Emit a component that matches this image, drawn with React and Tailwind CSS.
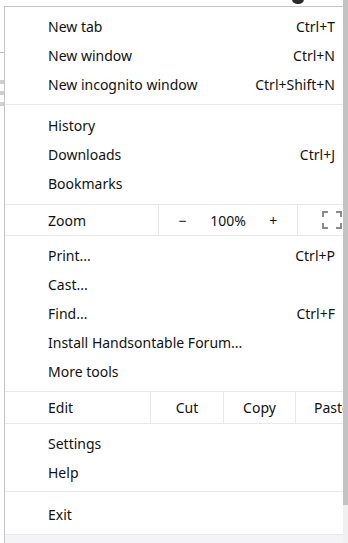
const font = { fontFamily: '"Noto Sans", "Open Sans", sans-serif' }

const Item = ({ label, shortcut }) => (
  <div className="h-[29px] flex items-center justify-between pl-[43px] pr-[8px]">
    <span>{label}</span>
    {shortcut && <span>{shortcut}</span>}
  </div>
)

const Sep = () => <div className="h-px bg-[#e8e8ea]" />

const FullscreenIcon = () => (
  <svg width="20" height="18" viewBox="0 0 20 18" fill="none" stroke="#8a8a8a" strokeWidth="2">
    <path d="M1 6V1h5M14 1h5v5M19 12v5h-5M6 17H1v-5" />
  </svg>
)

export default function App() {
  return (
    <div className="w-[348px] h-[543px] bg-white relative overflow-hidden text-[14px] text-[#111]" style={font}>
      {/* page behind the menu */}
      <div className="absolute left-[292px] -top-[6px] w-[12px] h-[10px] rounded-full bg-[#2a2a2a]" />
      <div className="absolute left-0 top-[52px] w-[4px] h-px bg-[#bdbdbd]" />
      <div className="absolute left-0 top-[80px] w-[4px] h-[4px] bg-[#cfcfcf]" />
      <div className="absolute left-0 top-[91px] w-[4px] h-[4px] bg-[#cfcfcf]" />
      <div className="absolute left-0 top-[102px] w-[4px] h-[4px] bg-[#cfcfcf]" />

      <div className="flex h-full pt-[6px]">
        <div className="w-[4px] shrink-0" />
        <div className="flex-1 min-w-0 flex flex-col border-l border-t border-[#c6c6c6] bg-white">
          <div className="pt-[5px] pb-[5px]">
            <Item label="New tab" shortcut="Ctrl+T" />
            <Item label="New window" shortcut="Ctrl+N" />
            <Item label="New incognito window" shortcut="Ctrl+Shift+N" />
          </div>
          <Sep />
          <div className="pt-[6px] pb-[6px]">
            <Item label="History" />
            <Item label="Downloads" shortcut="Ctrl+J" />
            <Item label="Bookmarks" />
          </div>
          <Sep />
          <div className="h-[30px] flex items-stretch">
            <div className="w-[153px] shrink-0 pl-[43px] flex items-center">Zoom</div>
            <div className="w-[140px] shrink-0 border-l border-r border-[#e8e8ea] flex items-center">
              <span className="w-[48px] text-center">−</span>
              <span className="w-[44px] text-center">100%</span>
              <span className="w-[48px] text-center">+</span>
            </div>
            <div className="flex-1 min-w-0 flex items-center pl-[24px] overflow-hidden">
              <FullscreenIcon />
            </div>
          </div>
          <Sep />
          <div className="pt-[5px] pb-[5px]">
            <Item label="Print..." shortcut="Ctrl+P" />
            <Item label="Cast..." />
            <Item label="Find..." shortcut="Ctrl+F" />
            <Item label="Install Handsontable Forum..." />
            <Item label="More tools" />
          </div>
          <Sep />
          <div className="h-[31px] flex items-stretch">
            <div className="w-[145px] shrink-0 pl-[43px] flex items-center">Edit</div>
            <div className="w-[73px] shrink-0 border-l border-[#e8e8ea] flex items-center justify-center">Cut</div>
            <div className="w-[72px] shrink-0 border-l border-[#e8e8ea] flex items-center justify-center">Copy</div>
            <div className="flex-1 min-w-0 border-l border-[#e8e8ea] flex items-center pl-[18px] overflow-hidden whitespace-nowrap">Paste</div>
          </div>
          <Sep />
          <div className="pt-[5px] pb-[4px]">
            <Item label="Settings" />
            <Item label="Help" />
          </div>
          <Sep />
          <div className="pt-[8px] pb-[5px]">
            <Item label="Exit" />
          </div>
          <Sep />
          <div className="flex-1 bg-[#f4f4f7]" />
        </div>
        <div className="w-[5px] shrink-0 -mt-[6px] flex flex-col">
          <div className="h-[505px] bg-[#c3c3c3]" />
          <div className="flex-1 bg-[#f0f0f0]" />
        </div>
      </div>
    </div>
  )
}
